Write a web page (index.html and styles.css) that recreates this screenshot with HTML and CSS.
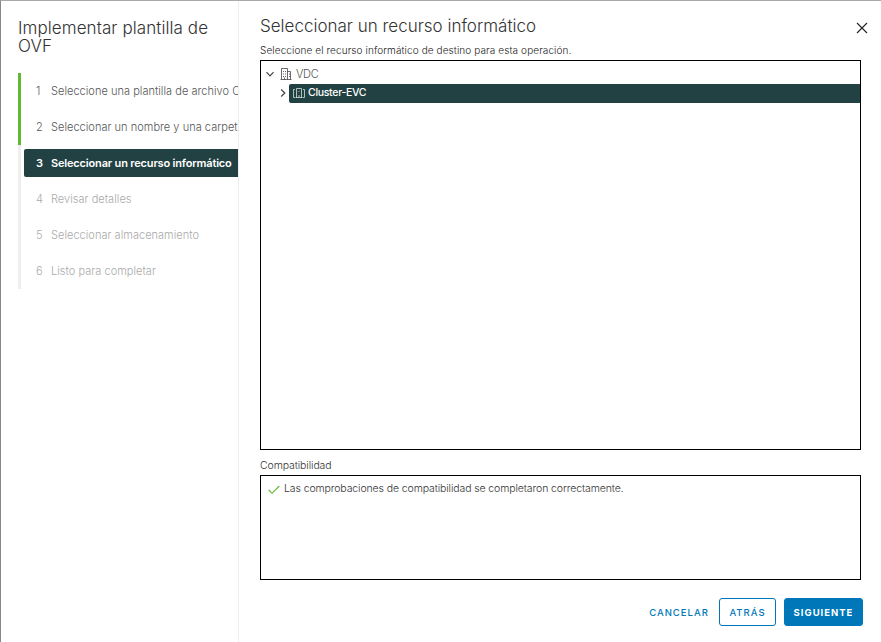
FILE: index.html
```html
<!DOCTYPE html>
<html lang="es">
<head>
<meta charset="utf-8">
<title>Implementar plantilla de OVF</title>
<link rel="stylesheet" href="styles.css">
</head>
<body>
<div class="wizard">
  <aside class="sidebar">
    <h1 class="wizard-title">Implementar plantilla de OVF</h1>
    <ol class="steps">
      <li class="step done"><span class="num">1</span><span class="label">Seleccione una plantilla de archivo OVF</span></li>
      <li class="step done"><span class="num">2</span><span class="label">Seleccionar un nombre y una carpeta</span></li>
      <li class="step current"><span class="num">3</span><span class="label">Seleccionar un recurso informático</span></li>
      <li class="step"><span class="num">4</span><span class="label">Revisar detalles</span></li>
      <li class="step"><span class="num">5</span><span class="label">Seleccionar almacenamiento</span></li>
      <li class="step"><span class="num">6</span><span class="label">Listo para completar</span></li>
    </ol>
  </aside>
  <main class="content">
    <header class="header">
      <h2 class="page-title">Seleccionar un recurso informático</h2>
      <svg class="close" viewBox="0 0 12 12"><path d="M1 1 11 11M11 1 1 11"/></svg>
    </header>
    <p class="hint">Seleccione el recurso informático de destino para esta operación.</p>
    <div class="tree">
      <div class="node root">
        <svg class="caret" viewBox="0 0 10 10"><path d="M1.500 3.200 5 6.800 8.500 3.200"/></svg>
        <svg class="icon" viewBox="0 0 12 12"><path d="M1.500 11.500V.5h6v11M7.500 3.500h3v8M.5 11.500h11M3.500 3v1M5.500 3v1M3.500 5.500v1M5.500 5.500v1M3.500 8v1M5.500 8v1M4.500 11.500V9.500M9.500 5.500v1M9.500 8v1"/></svg>
        <span class="vdc">VDC</span>
      </div>
      <div class="node child">
        <svg class="caret" viewBox="0 0 10 10"><path d="M3.200 1.500 6.800 5 3.200 8.500"/></svg>
        <div class="selected">
          <svg class="icon light" viewBox="0 0 12 12"><path d="M2 2.500H.5v8H2M10 2.500h1.500v8H10M3.500 11V1.500h5V11M2.500 10.500h7M6 4v1M6 8v2"/></svg>
          <span class="cluster">Cluster-EVC</span>
        </div>
      </div>
    </div>
    <p class="compat-title">Compatibilidad</p>
    <div class="compat">
      <svg class="check" viewBox="0 0 12 10"><path d="M.7 5 4 8.300 11.300 1"/></svg>
      <span class="result">Las comprobaciones de compatibilidad se completaron correctamente.</span>
    </div>
    <footer class="footer">
      <button class="btn link">CANCELAR</button>
      <button class="btn outline">ATRÁS</button>
      <button class="btn primary">SIGUIENTE</button>
    </footer>
  </main>
</div>
</body>
</html>
```
FILE: styles.css
```css
* { box-sizing: border-box; }
body { margin: 0; background: #fff; color: #333; font-family: Inter, "Liberation Sans", sans-serif; font-weight: 300; font-size: 11px; }
h1, h2, p, ol { margin: 0; padding: 0; font-weight: 300; }
svg { fill: none; stroke: #444; flex: none; }
.wizard { display: flex; width: 881px; height: 642px; border-top: 1px solid #aaa; border-left: 1px solid #888; overflow: hidden; }
.sidebar { width: 238px; flex: none; border-right: 1px solid #eee; padding: 18px 0 0 17px; overflow: hidden; }
.wizard-title { font-size: 17px; line-height: 18px; height: 54px; letter-spacing: .08px; }
.steps { list-style: none; }
.step { display: flex; align-items: center; height: 36px; padding-left: 15px; border-left: 3px solid #eee; color: #aaa; white-space: nowrap; }
.step.done { border-color: #60b932; color: #565656; }
.num { width: 15px; flex: none; }
.label { letter-spacing: .03px; }
.step.current { color: #fff; font-weight: 600; padding-left: 3px; }
.step.current .num { height: 28px; line-height: 28px; width: 27px; padding-left: 12px; background: #224142; border-radius: 2px 0 0 2px; }
.step.current .label { height: 28px; line-height: 28px; flex: 1; background: #224142; letter-spacing: -.17px; }
.content { flex: 1; padding: 13px 20px 0 21px; display: flex; flex-direction: column; }
.header { display: flex; justify-content: space-between; height: 27px; }
.page-title { font-size: 17px; line-height: 24px; }
.close { width: 12px; height: 12px; margin: 8px -7px 0 0; stroke: #222; stroke-width: 1.100; }
.hint { font-size: 10px; line-height: 18px; height: 19px; color: #222; letter-spacing: .1px; }
.tree { border: 1px solid #000; height: 390px; padding-top: 3px; }
.node { display: flex; align-items: center; height: 19px; }
.root { padding-left: 4px; }
.child { padding-left: 17px; height: 20px; }
.caret { width: 10px; height: 10px; stroke-width: 1.200; }
.root .icon { margin: 0 4px 0 5px; }
.icon { width: 12px; height: 12px; stroke-width: .8; }
.selected { display: flex; align-items: center; flex: 1; height: 19px; margin-left: 1px; padding-left: 4px; background: #224142; color: #fff; font-weight: 500; border-radius: 2px 0 0 2px; }
.light { stroke: #d5dfdf; margin-right: 3px; }
.vdc { color: #565656; letter-spacing: -.3px; }
.cluster { font-size: 10.500px; line-height: 17px; padding-bottom: 1px; letter-spacing: -.3px; }
.compat-title { font-size: 10.500px; line-height: 18px; margin-top: 7px; height: 18px; letter-spacing: -.1px; }
.compat { border: 1px solid #000; height: 105px; padding: 4px 7px; display: flex; align-items: flex-start; line-height: 18px; font-size: 10.500px; letter-spacing: -.11px; }
.check { width: 12px; height: 10px; margin: 5px 4px 0 0; stroke: #60b932; stroke-width: 1.100; }
.footer { display: flex; justify-content: flex-end; margin: 18px -2px 0 0; }
.btn { height: 28px; border: 1px solid #0077b8; border-radius: 3px; background: #fff; color: #0079b8; font: 500 9.500px Inter, sans-serif; letter-spacing: 1px; padding: 0; margin-left: 8px; }
.btn.link { width: 62px; border-color: transparent; margin-right: 1px; }
.btn.outline { width: 57px; }
.btn.primary { width: 79px; background: #0077b8; color: #fff; font-weight: 700; }
```
